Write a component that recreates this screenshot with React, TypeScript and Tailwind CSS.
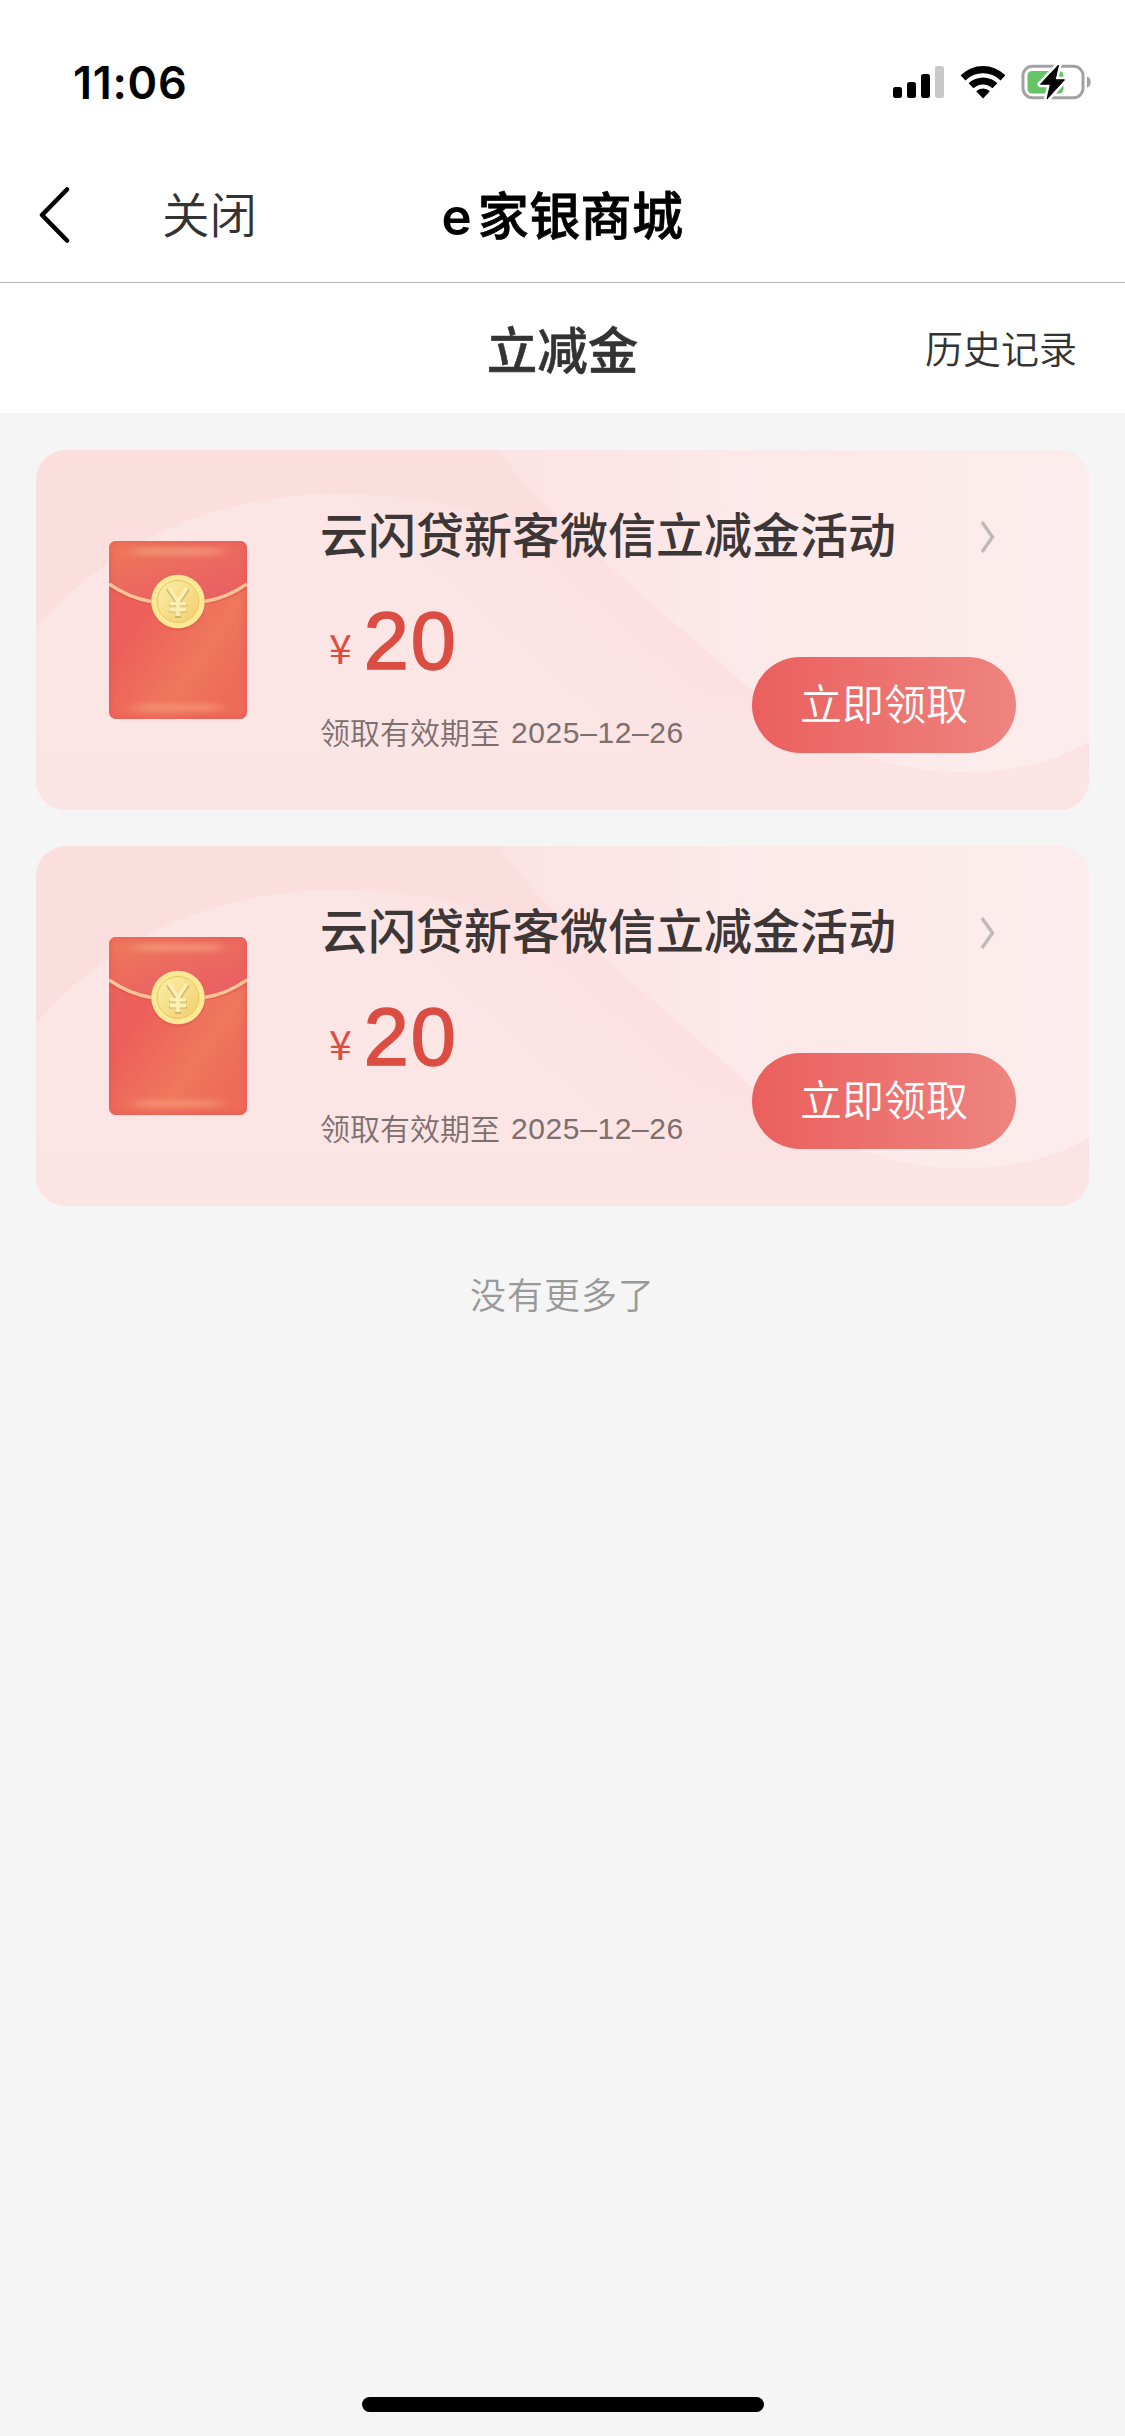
interface Coupon {
  id: number;
  title: string;
  amount: number;
  expire: string;
}

const coupons: Coupon[] = [
  { id: 1, title: '云闪贷新客微信立减金活动', amount: 20, expire: '2025–12–26' },
  { id: 2, title: '云闪贷新客微信立减金活动', amount: 20, expire: '2025–12–26' },
];

const StatusBar = () => (
  <div className="flex h-[132px] items-center justify-between bg-white pl-[73px] pr-[33px] pt-8">
    <div className="font-[Inter,sans-serif] text-[45px] leading-none font-semibold tracking-[0.7px]">11:06</div>

    <div className="flex items-center">
      <svg className="h-[36px] w-[52px]" viewBox="0 0 52 36">
        <rect x="0" y="23" width="9" height="11" rx="2.5" />
        <rect x="14" y="18" width="9" height="16" rx="2.5" />
        <rect x="28" y="10" width="9" height="24" rx="2.5" />
        <rect x="42" y="2" width="9" height="32" rx="2.5" fill="#c8c8c8" />
      </svg>

      <svg className="ml-[15px] h-[36px] w-[46px]" viewBox="0 0 46 36">
        <path d="M0.6 11.2 A32 32 0 0 1 45.4 11.2 L40.6 16.4 A25 25 0 0 0 5.4 16.4 Z" />
        <path d="M8.6 19.3 A20.5 20.5 0 0 1 37.4 19.3 L32.5 24.3 A13.6 13.6 0 0 0 13.5 24.3 Z" />
        <path d="M16.2 27.2 A9.6 9.6 0 0 1 29.8 27.2 L23 34.4 Z" />
      </svg>

      <svg className="ml-[15px] h-[38px] w-[71px]" viewBox="0 0 71 38">
        <rect x="2" y="3.2" width="60" height="31.6" rx="9.5" fill="none" stroke="#a2a2a2" strokeWidth="3" />
        <rect x="6.5" y="8" width="36" height="22.5" rx="4.5" fill="#65c466" />
        <path d="M66 13.5 C71 14.8 71 23.2 66 24.5 Z" fill="#a2a2a2" />
        <path
          d="M37.5 2 L19.5 21.2 H29.4 L26 36 L43.5 16.8 H34.2 Z"
          stroke="#fff"
          strokeWidth="6"
          strokeLinejoin="round"
        />
        <path d="M37.5 2 L19.5 21.2 H29.4 L26 36 L43.5 16.8 H34.2 Z" stroke="#000" strokeLinejoin="round" />
      </svg>
    </div>
  </div>
);

const NavBar = () => (
  <div className="grid h-[151px] grid-cols-3 items-center border-b border-[#b2b2b2] bg-white pt-4">
    <div className="flex items-center">
      <svg className="ml-[38px] h-[58px] w-[34px]" viewBox="0 0 34 58" fill="none">
        <path d="M29 3.5 L4 29 L29 54.5" stroke="#000" strokeWidth="4.6" strokeLinecap="round" strokeLinejoin="round" />
      </svg>
      <span className="ml-[90px] pb-[4px] text-[47.5px] leading-none font-[350] text-[#333]">关闭</span>
    </div>
    <div className="flex items-baseline justify-center pb-[1px] text-[51px] leading-none font-medium whitespace-nowrap text-black">
      <span className="mr-[6px] font-[Inter,sans-serif] font-semibold">e</span>
      <span className="tracking-[0.4px] [-webkit-text-stroke:0.8px_#000]">家银商城</span>
    </div>
  </div>
);

const TitleBar = () => (
  <div className="grid h-[130px] grid-cols-3 items-center bg-white text-[#333]">
    <div />
    <div className="pb-[2px] text-center text-[50.5px] leading-none font-medium [-webkit-text-stroke:0.6px_#333]">
      立减金
    </div>
    <div className="pr-12 pb-[3px] text-right text-[38px] leading-none font-[350]">历史记录</div>
  </div>
);

const RedPacket = () => (
  <svg className="h-[178px] w-[138px]" viewBox="0 0 138 178">
    <defs>
      <linearGradient id="packet" x1="0" y1="0.2" x2="0.8" y2="0.9">
        <stop offset="0" stopColor="#ea625a" />
        <stop offset="0.3" stopColor="#ed5f5a" />
        <stop offset="0.75" stopColor="#ee785c" />
        <stop offset="1" stopColor="#ed6c59" />
      </linearGradient>
      <linearGradient id="flap" x1="0" y1="0" x2="0.7" y2="1">
        <stop offset="0" stopColor="#ee7b58" />
        <stop offset="0.6" stopColor="#eb6860" />
        <stop offset="1" stopColor="#e95f61" />
      </linearGradient>
      <linearGradient id="coin" x1="0" y1="0" x2="1" y2="1">
        <stop offset="0" stopColor="#faefa6" />
        <stop offset="1" stopColor="#f3cd6c" />
      </linearGradient>
      <filter id="soft" x="-30%" y="-300%" width="160%" height="700%">
        <feGaussianBlur stdDeviation="8 3" />
      </filter>
      <filter id="rim" x="-10%" y="-10%" width="120%" height="120%">
        <feGaussianBlur stdDeviation="2.5" />
      </filter>
      <clipPath id="body">
        <rect width="138" height="178" rx="7" />
      </clipPath>
    </defs>
    <g clipPath="url(#body)">
      <rect width="138" height="178" fill="url(#packet)" />
      <path d="M0 0 H138 V45 Q69 78 0 45 Z" fill="url(#flap)" />
      <rect x="0" y="0" width="138" height="178" rx="7" fill="none" stroke="#e8565a" strokeWidth="6" opacity="0.6" filter="url(#rim)" />
      <rect x="26" y="8" width="86" height="5" rx="2.5" fill="#f9ae90" opacity="0.8" filter="url(#soft)" />
      <rect x="26" y="164" width="86" height="5" rx="2.5" fill="#f9a583" opacity="0.8" filter="url(#soft)" />
      <path d="M0 46 Q20 59 42 62 M96 62 Q118 59 138 46" fill="none" stroke="#d64b48" strokeWidth="3" opacity="0.4" />
      <path d="M0 43 Q20 57 42 60.5 M96 60.5 Q118 57 138 43" fill="none" stroke="#fbc495" strokeWidth="3.4" />
    </g>
    <circle cx="69" cy="63" r="27" fill="#d5523f" opacity="0.35" />
    <circle cx="69" cy="60.5" r="26.8" fill="#fbe995" />
    <circle cx="69" cy="60.5" r="21" fill="url(#coin)" stroke="#e6c766" strokeWidth="1" />
    <path d="M58 48.5 L67.5 62 M80 48.5 L70.5 62 M60 64.5 H78 M60 70.5 H78 M66 76 H72" fill="none" stroke="#cbb777" strokeWidth="2" />
    <path d="M60.5 47.5 L69 60.5 L77.5 47.5 M69 60.5 V75 M61 62.8 H77 M61 68.6 H77" fill="none" stroke="#fcefb2" strokeWidth="3.6" />
  </svg>
);

const CardBackground = () => (
  <svg className="absolute inset-0 h-full w-full" viewBox="0 0 1053 360" preserveAspectRatio="none">
    <defs>
      <linearGradient id="hill" gradientUnits="userSpaceOnUse" x1="650" y1="182" x2="555" y2="290">
        <stop offset="0" stopColor="#fce0e2" />
        <stop offset="1" stopColor="#fbe5e5" />
      </linearGradient>
      <linearGradient id="base" gradientUnits="userSpaceOnUse" x1="0" y1="235" x2="0" y2="320">
        <stop offset="0" stopColor="#fbe4e4" stopOpacity="0" />
        <stop offset="1" stopColor="#fbe4e4" />
      </linearGradient>
      <linearGradient id="sky" x1="0" y1="0" x2="1" y2="0">
        <stop offset="0" stopColor="#fce3e5" />
        <stop offset="0.5" stopColor="#fceaeb" />
        <stop offset="1" stopColor="#fcecec" />
      </linearGradient>
    </defs>
    <path d="M0 178 C60 108 160 44 300 44 C420 44 520 80 574 117 L1053 117 V360 H0 Z" fill="url(#hill)" />
    <path d="M0 235 H1053 V360 H0 Z" fill="url(#base)" />
    <path d="M462 0 C500 50 535 84 574 117 L714 239 C775 290 850 322 924 322 C985 322 1020 310 1053 292 V0 Z" fill="url(#sky)" />
  </svg>
);

const CouponCard = ({ title, amount, expire }: Coupon) => (
  <div className="relative h-[360px] overflow-hidden rounded-[30px] bg-[#fbdfdf]">
    <CardBackground />
    <div className="relative flex h-full">
      <div className="ml-[73px] mt-[91px]">
        <RedPacket />
      </div>
      <div className="ml-[73px] mr-[73px] flex-1 pt-[52px]">
        <div className="flex items-center justify-between text-[#3c3636]">
          <div className="text-[48px] leading-[60px] font-medium whitespace-nowrap">{title}</div>
          <svg className="mt-[9px] mr-[20px] h-[34px] w-[16px]" viewBox="0 0 16 34" fill="none">
            <path d="M2 2 L12.5 17 L2 32" stroke="#c0b8b9" strokeWidth="3.4" />
          </svg>
        </div>
        <div className="flex items-start justify-between">
          <div className="pt-[39px]">
            <div className="flex pl-[9px] leading-[80px] text-[#db4d43]">
              <span className="pt-[5px] text-[41px]">¥</span>
              <span className="ml-[12px] font-['Liberation_Sans',sans-serif] text-[81px] tracking-[2px] [-webkit-text-stroke:1.6px_#db4d43]">
                {amount}
              </span>
            </div>
            <div className="mt-[25px] flex text-[30px] leading-10 text-[#7c6f6f]">
              <span className="font-[350]">领取有效期至</span>
              <span className="ml-[11px] pt-[2px] font-['Liberation_Sans',sans-serif] tracking-[0.6px]">{expire}</span>
            </div>
          </div>
          <button className="mt-[95px] h-24 w-[264px] rounded-full bg-linear-to-r from-[#ea5f5d] to-[#ee8480] pb-[6px] text-[42px] leading-none font-[350] text-white">
            立即领取
          </button>
        </div>
      </div>
    </div>
  </div>
);

const App = () => {
  return (
    <div className="flex h-[2436px] w-[1125px] flex-col bg-[#f5f5f5] font-['Noto_Sans_CJK_SC',sans-serif]">
      <StatusBar />
      <NavBar />
      <TitleBar />
      <div className="flex flex-col gap-9 px-9 pt-[37px]">
        {coupons.map((item) => (
          <CouponCard key={item.id} {...item} />
        ))}
      </div>
      <div className="mt-[69px] text-center text-[36px] leading-9 font-[350] tracking-[1px] text-[#999]">没有更多了</div>
      <div className="mx-auto mt-auto mb-6 h-[15px] w-[402px] rounded-full bg-black" />
    </div>
  );
};

export default App;
